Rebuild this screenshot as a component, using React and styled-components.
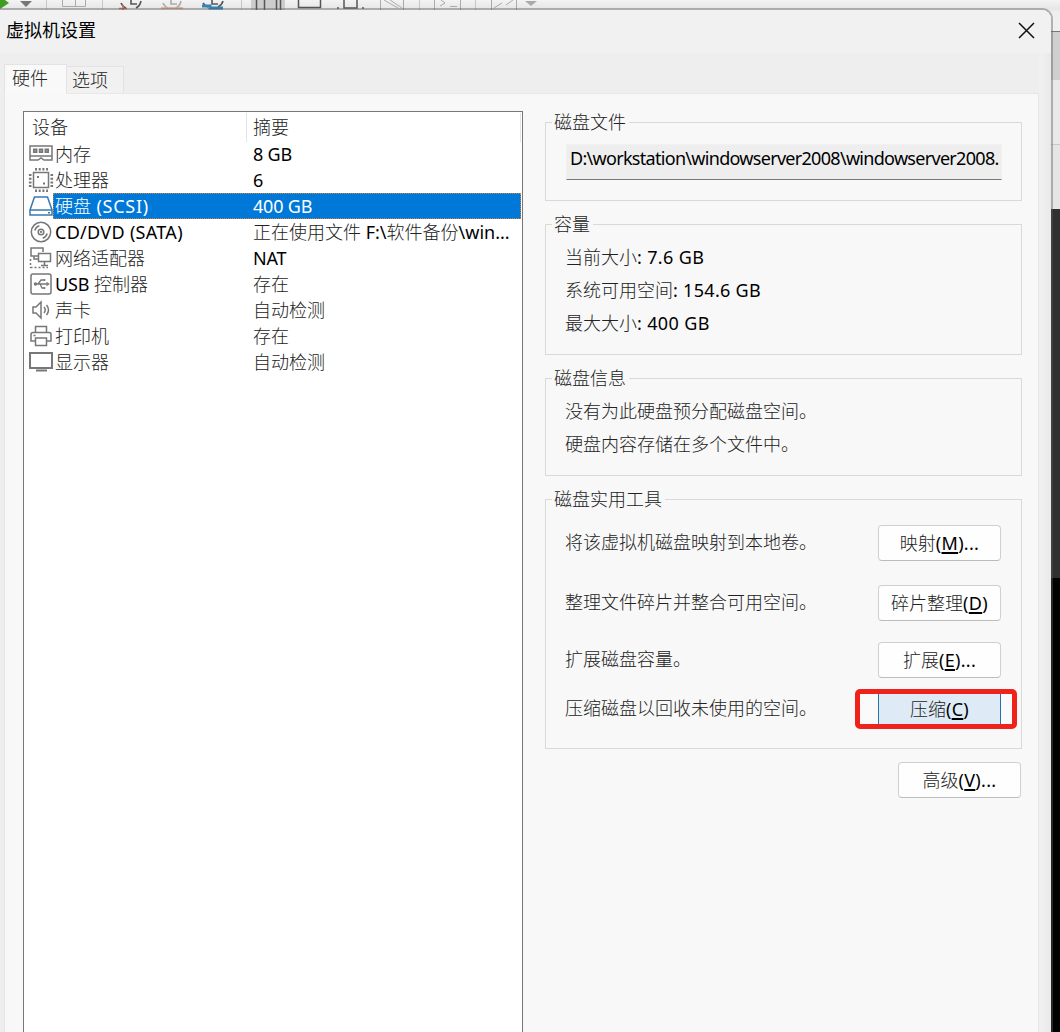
import React from 'react';
import styled, { createGlobalStyle } from 'styled-components';

const Global = createGlobalStyle`
  html, body { margin: 0; padding: 0; }
  body { height: 1032px; overflow: hidden; background: #efefef; }
  * { box-sizing: border-box; }
`;
const Desktop = styled.div`
  position: relative; width: 1060px; height: 1032px; padding-top: 10px; overflow: hidden;
  font-family: "Noto Sans", "Noto Sans CJK SC", sans-serif; font-size: 18px; line-height: 26px; color: #000;
`;
const Parent = styled.div`
  position: absolute; inset: 0; display: flex; flex-direction: column; align-items: flex-end;
`;
const ParentBar = styled.div`
  width: 100%; height: 31px; background: linear-gradient(#f3f3f3, #e6e6e6 9px, #efefef 12px);
`;
const Band = styled.div`
  width: 14px; height: ${p => p.$h}px; flex: ${p => (p.$h ? 'none' : 1)};
  background: ${p => p.$bg}; border-top: 1px solid ${p => p.$line || p.$bg};
`;
const Dialog = styled.section`
  position: relative; width: 1051px; height: 1040px; display: flex; flex-direction: column;
  border-radius: 0 9px 0 0; box-shadow: 0 0 0 2px rgba(90, 90, 90, 0.42);
  background: linear-gradient(90deg, #eee 1038px, #f1f1f1 1040px, #e9e9e9);
`;
const TitleBar = styled.header`
  height: 43px; display: flex; align-items: center; justify-content: space-between;
  padding: 0 16px 2px 6px; background: #f1f1f1; border-radius: 0 9px 0 0;
`;
const Title = styled.h1`
  margin: 0; padding-bottom: 2px; font-size: 18px; font-weight: 400; line-height: 26px;
`;
const Close = styled.button`
  border: 0; padding: 0; width: 17px; height: 17px; background: none; display: flex;
`;
const Tabs = styled.nav`
  height: 40px; display: flex; align-items: flex-end; padding-left: 4px;
`;
const Tab = styled.div`
  width: ${p => (p.$active ? 63 : 57)}px; height: ${p => (p.$active ? 30 : 27)}px;
  margin-bottom: ${p => (p.$active ? -1 : 0)}px; z-index: ${p => (p.$active ? 1 : 0)};
  padding: 0 0 0 ${p => (p.$active ? 7 : 5)}px;
  background: ${p => (p.$active ? '#f9f9f9' : '#f1f1f1')};
  border: 1px solid #e3e3e3; border-bottom-color: ${p => (p.$active ? '#f9f9f9' : '#f1f1f1')};
  border-left-width: ${p => (p.$active ? 1 : 0)}px;
`;
const Page = styled.main`
  width: 1035px; margin-left: 4px; flex: 1; display: flex; gap: 22px; padding: 17px 16px 0 18px;
  background: #f8f8f8; border: 1px solid #e5e5e5; border-bottom: 0; border-top-color: #e8e8e8;
`;
const DeviceList = styled.div`
  width: 500px; border: 1px solid #777; background: #fff; padding-right: 1px;
`;
const ListHead = styled.div`
  display: grid; grid-template-columns: 223px 274px; height: 29px; padding-top: 1px; line-height: 29px;
`;
const HeadCell = styled.div`
  padding-left: ${p => (p.$first ? 8 : 6)}px; border-right: 1px solid #e4e4e4;
`;
const Row = styled.div`
  height: 26px; display: grid; grid-template-columns: 29px 1fr;
`;
const RowIcon = styled.svg`
  width: 26px; height: 26px; margin-left: 4px; fill: none;
  stroke: ${p => (p.$on ? '#3979b0' : '#777')}; stroke-width: 1.5;
`;
const RowText = styled.div`
  display: grid; grid-template-columns: 198px 1fr; white-space: nowrap; padding-left: 2px;
  background: ${p => (p.$on ? '#0078d7' : 'transparent')}; color: ${p => (p.$on ? '#fff' : '#000')};
  outline: ${p => (p.$on ? '1px dotted #c88443' : 'none')}; outline-offset: -1px;
`;
const Cjk = styled.span`
  font-family: "Noto Sans CJK SC", sans-serif; font-weight: 300; color: ${p => (p.$on ? '#fff' : '#222')};
  line-height: 18px;
`;
const Latin = styled.span`
  font-family: "Noto Sans", sans-serif; letter-spacing: ${p => p.$ls || 0}px;
`;
const Settings = styled.div`
  width: 477px; display: flex; flex-direction: column; padding-top: 11px;
`;
const Group = styled.section`
  min-width: 0; margin: 0 0 ${p => p.$mb}px; padding: 0 20px 0 19px; height: ${p => p.$h}px; border: 1px solid #d9d9d9;
`;
const Legend = styled.div`
  width: fit-content; height: 26px; margin: -14px 0 0 -13px; padding: 0 3px 0 2px; background: #f8f8f8;
`;
const PathField = styled.div`
  margin: 9px 0 0 1px; height: 36px; width: 436px; padding: 0 0 0 3px; background: #eee;
  border: 1px solid #f1f1f1; border-bottom-color: #777; white-space: nowrap;
`;
const Lines = styled.div`
  margin-top: 4px; line-height: 33px; white-space: nowrap;
`;
const Line = styled.div`
  height: 33px;
`;
const Tool = styled.div`
  height: 36px; margin-top: ${p => p.$mt}px; display: flex; align-items: center; justify-content: space-between;
`;
const ToolText = styled.div`
  padding-bottom: 2px; white-space: nowrap;
`;
const Button = styled.button`
  width: 123px; height: 36px; padding: 0 0 1px; flex: none; font: inherit; color: #000;
  background: #fefefe; border: 1px solid #d0d0d0; border-bottom-color: #bcbcbc; border-radius: 4px;
  align-self: ${p => (p.$end ? 'flex-end' : 'auto')}; margin-right: ${p => (p.$end ? 1 : 0)}px;
`;
const Highlight = styled.div`
  width: 162px; height: 40px; margin-right: -16px; padding: 0 11px 0 18px; flex: none;
  border: 5px solid #f0231c; border-radius: 5px; background: #fafafa; display: flex;
`;
const HotButton = styled.button`
  width: 123px; height: 30px; padding: 0; font: inherit; color: #000;
  background: #deebf6; border: solid #2673ab; border-width: 0 1px;
`;
const Key = styled.u`
  text-decoration-thickness: 1.5px; text-underline-offset: 2px;
`;

function Mixed({ children, on, ls }) {
  return children.split(/([\u3000-\u9fff\uff00-\uffef]+)/).filter(Boolean).map((part, i) =>
    /[\u3000-\u9fff\uff00-\uffef]/.test(part)
      ? <Cjk key={i} $on={on}>{part}</Cjk>
      : <Latin key={i} $ls={ls ?? -0.2}>{part}</Latin>);
}
function Caption({ text, hot, tail }) {
  return <><Cjk>{text}</Cjk><Latin $ls={0.3}>(<Key>{hot}</Key>){tail}</Latin></>;
}

const icons = {
  memory: <><path d="M2 5h22v10H2zM2 14.500v4.500h8l3-2 3 2h8v-4.500" /><path d="M5.700 8.200h3v3h-3zM11.500 8.200h3v3h-3zM17.300 8.200h3v3h-3z" fill="#999" /></>,
  cpu: <><rect x="5.500" y="5.500" width="15" height="15" /><path d="M7 2.200h13M7 23.800h13" strokeWidth="2.600" strokeDasharray="2 1.700" /><path d="M2.200 7v13M23.800 7v13" strokeWidth="2.600" strokeDasharray="2 1.700" /><path d="M9 10h2M15 16.500h2" strokeWidth="2" /></>,
  disk: <><path d="M6.500 4h13l4.500 13v5H2v-5zM2 17h22" /><path d="M20 19.700h2" /></>,
  cd: <><circle cx="13" cy="13" r="9.700" /><circle cx="13" cy="13" r="2.800" /><circle cx="13" cy="13" r=".4" /><path d="M6.800 11.500q1-3.500 4.500-4.700M19.200 14.500q-1 3.500-4.500 4.700" /></>,
  net: <><path d="M10 11H3V3h12v4M6 11v3h4M10.500 8.500h12v8h-12zM16.500 17v3M13 20.500h7" /><path d="M2.500 14v9M2.500 22.500H20" strokeDasharray="2 2" /></>,
  usb: <><rect x="3" y="3" width="20" height="20" rx="2" /><path d="M7 13h12M10 13l3-4h3M12 13l2 4h3" strokeWidth="1.300" /><circle cx="7.500" cy="13" r="1" /><path d="M18.500 11.500l2 1.500-2 1.500M16.500 8v2M16.500 16v2" /></>,
  sound: <><path d="M5 10h3l5-5v16l-5-5H5zM16 10q2.500 3 0 6M18.500 8q4 5 0 10" /></>,
  printer: <><path d="M7.500 9V3.500h11V9M7 18H3v-6.500q0-2 2-2h16q2 0 2 2V18h-4M7.500 15h11v7.500h-11zM5.500 12.500h2" /></>,
  display: <><path d="M2 4h22v15H2z" strokeWidth="2" /><path d="M8 21.500h11" strokeWidth="2" /></>,
};

const devices = [
  ['memory', '内存', '8 GB'], ['cpu', '处理器', '6'], ['disk', '硬盘 (SCSI)', '400 GB'],
  ['cd', 'CD/DVD (SATA)', '正在使用文件 F:\\软件备份\\win...'], ['net', '网络适配器', 'NAT'],
  ['usb', 'USB 控制器', '存在'], ['sound', '声卡', '自动检测'], ['printer', '打印机', '存在'],
  ['display', '显示器', '自动检测'],
];
const nameSpacing = { disk: 0.75, cd: 0.3, usb: -0.1 };
const infoSpacing = { cd: 0 };

function ToolbarIcons() {
  return (
    <svg width="560" height="10" fill="none" stroke="#aaa" display="block">
      <path d="M0 0h5l4 3-9 6z" fill="#3f9d22" stroke="none" />
      <path d="M20 1h12l-6 6z" fill="#777" stroke="none" />
      <path d="M46.500 0v10M102.500 0v10M241.500 0v10M419.500 0v10M475.500 0v10" stroke="#c6c6c6" />
      <path d="M62.500 0v6.500h23V0M75.500 0v6" />
      <g strokeWidth="1.600"><path d="M121 3q2 4 5 5M141 1q-1 5-5 7M131 0v4h6" stroke="#555" /><path d="M119 8.500h8M123 5v5" stroke="#c76f5c" />
        <path d="M163 3q2 4 5 5M181 1q-1 5-5 7M171 0v4h6" stroke="#aaa" /><path d="M161 8h22" stroke="#e0a18d" />
        <path d="M203 3q2 3 5 4M223 1q-1 4-5 6M212 0v4h6" stroke="#555" /><path d="M202 6h8v2h13" stroke="#3484b7" strokeWidth="3" /></g>
      <path d="M251 0h34v10h-34z" fill="#ccc" stroke="none" />
      <path d="M256.500 0v10M264.500 0v10M276.500 0v10M280.500 0v10M298.500 0v7.500h22V0M344 0v8h13V0M337 8h2M362 8h2" stroke="#555" strokeWidth="1.500" />
      <path d="M380.500 0v10M403.500 0v10M384 0l14 8M390 0l12 8M434.500 0v10M460.500 0v10M440 6l5-3-4-3M450 6.500h7M491.500 0v10M516.500 0v10M494 8l8-5M506 5l7-5" />
      <path d="M525 1h12l-6 5z" fill="#aaa" stroke="none" />
    </svg>
  );
}

export default function App() {
  return (
    <Desktop>
      <Global />
      <Parent>
        <ParentBar><ToolbarIcons /></ParentBar>
        <Band $h={49} $bg="#cfcfd1" $line="#777" />
        <Band $h={64} $bg="#e9e9e9" />
        <Band $h={65} $bg="#e5e5e5" $line="#c8c8c8" />
        <Band $h={369} $bg="#303030" />
        <Band $bg="#000" />
      </Parent>
      <Dialog>
        <TitleBar>
          <Title>虚拟机设置</Title>
          <Close aria-label="关闭"><svg width="17" height="17" stroke="#111" strokeWidth="1.500"><path d="M1 1l15 15M16 1L1 16" /></svg></Close>
        </TitleBar>
        <Tabs>
          <Tab $active><Cjk>硬件</Cjk></Tab>
          <Tab><Cjk>选项</Cjk></Tab>
        </Tabs>
        <Page>
          <DeviceList>
            <ListHead><HeadCell $first><Cjk>设备</Cjk></HeadCell><HeadCell><Cjk>摘要</Cjk></HeadCell></ListHead>
            {devices.map(([icon, name, info]) => {
              const on = icon === 'disk';
              return (
                <Row key={icon}>
                  <RowIcon viewBox="0 0 26 26" $on={on}>{icons[icon]}</RowIcon>
                  <RowText $on={on}>
                    <span><Mixed on={on} ls={nameSpacing[icon]}>{name}</Mixed></span>
                    <span><Mixed on={on} ls={infoSpacing[icon]}>{info}</Mixed></span>
                  </RowText>
                </Row>
              );
            })}
          </DeviceList>
          <Settings>
            <Group $h={79} $mb={23}>
              <Legend><Cjk>磁盘文件</Cjk></Legend>
              <PathField><Mixed ls={-0.7}>D:\workstation\windowserver2008\windowserver2008.</Mixed></PathField>
            </Group>
            <Group $h={131} $mb={23}>
              <Legend><Cjk>容量</Cjk></Legend>
              <Lines>
                <Line><Mixed ls={0.35}>当前大小: 7.6 GB</Mixed></Line>
                <Line><Mixed ls={0.3}>系统可用空间: 154.6 GB</Mixed></Line>
                <Line><Mixed ls={0.35}>最大大小: 400 GB</Mixed></Line>
              </Lines>
            </Group>
            <Group $h={98} $mb={23}>
              <Legend><Cjk>磁盘信息</Cjk></Legend>
              <Lines>
                <Line><Mixed>没有为此硬盘预分配磁盘空间。</Mixed></Line>
                <Line><Mixed>硬盘内容存储在多个文件中。</Mixed></Line>
              </Lines>
            </Group>
            <Group $h={250} $mb={13}>
              <Legend><Cjk>磁盘实用工具</Cjk></Legend>
              <Tool $mt={13}><ToolText><Cjk>将该虚拟机磁盘映射到本地卷。</Cjk></ToolText><Button><Caption text="映射" hot="M" tail="..." /></Button></Tool>
              <Tool $mt={24}><ToolText><Cjk>整理文件碎片并整合可用空间。</Cjk></ToolText><Button><Caption text="碎片整理" hot="D" /></Button></Tool>
              <Tool $mt={21}><ToolText><Cjk>扩展磁盘容量。</Cjk></ToolText><Button><Caption text="扩展" hot="E" tail="..." /></Button></Tool>
              <Tool $mt={13}><ToolText><Cjk>压缩磁盘以回收未使用的空间。</Cjk></ToolText><Highlight><HotButton><Caption text="压缩" hot="C" /></HotButton></Highlight></Tool>
            </Group>
            <Button $end><Caption text="高级" hot="V" tail="..." /></Button>
          </Settings>
        </Page>
      </Dialog>
    </Desktop>
  );
}
